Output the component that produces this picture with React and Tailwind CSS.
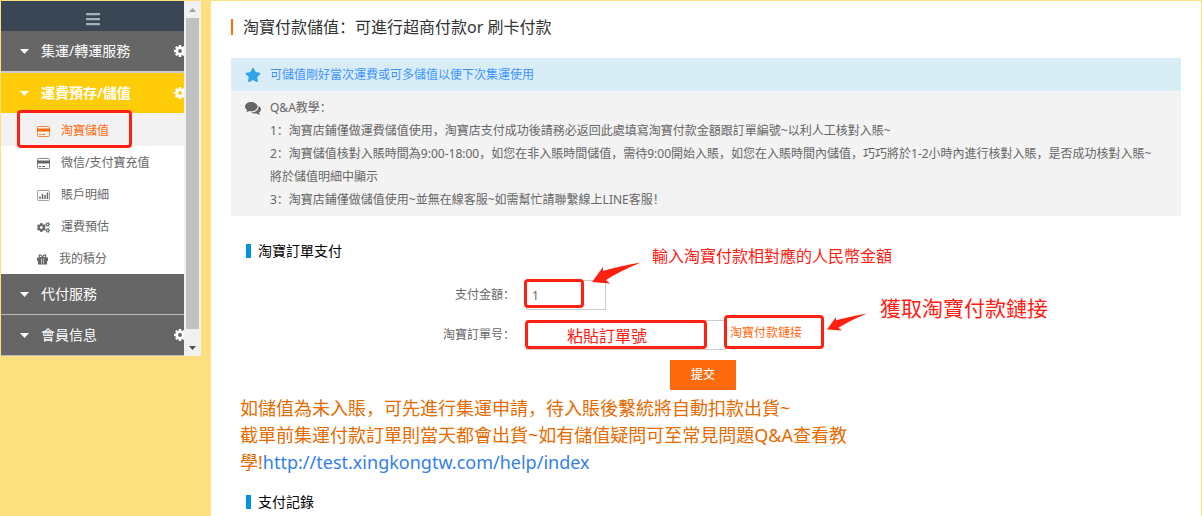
import { useState } from "react";
import { FaBars, FaCogs, FaStar } from "react-icons/fa";

function CardIcon() {
  return (
    <svg viewBox="0 0 13 11" className="h-[11px] w-[13px]" fill="none" stroke="currentColor">
      <rect x="0.5" y="0.5" width="12" height="10" rx="1" opacity="0.8" />
      <path d="M0 4h13" strokeWidth="3" />
      <path d="M2 8.5h2M5 8.5h3" />
    </svg>
  );
}

function ChartIcon() {
  return (
    <svg viewBox="0 0 13 11" className="h-[11px] w-[13px]" fill="none" stroke="currentColor">
      <rect x="0.5" y="0.5" width="12" height="10" rx="1" opacity="0.6" />
      <path d="M3 9V6.5M5.5 9V4M8 9V5M10.5 9V2.5" strokeWidth="1.5" />
    </svg>
  );
}

function GiftIcon() {
  return (
    <svg viewBox="0 0 11 11" className="size-[11px]" fill="currentColor">
      <path d="M0 3.5h11V7H10v3.5H1V7H0z" />
      <path d="M5.5 3.5C3 3.8 2 3.2 2.2 2C2.6 0.5 4.5 0.4 5.5 3.3C6.5 0.4 8.4 0.5 8.8 2C9 3.2 8 3.8 5.5 3.5z" fill="none" stroke="currentColor" strokeWidth="1.2" />
      <path d="M4.5 4.5V9.5M6.5 4.5V9.5" stroke="#fff" strokeWidth="0.6" />
    </svg>
  );
}

function GearIcon() {
  return (
    <svg viewBox="0 0 12 12" className="-mr-[2px] size-3 shrink-0" fill="none" stroke="currentColor">
      <circle cx="6" cy="6" r="3.2" strokeWidth="2.6" />
      <path d="M6 0V2M6 10V12M0 6H2M10 6H12M1.8 1.8L3.2 3.2M8.8 8.8L10.2 10.2M1.8 10.2L3.2 8.8M8.8 3.2L10.2 1.8" strokeWidth="2.4" />
    </svg>
  );
}

function CommentsIcon() {
  return (
    <svg viewBox="0 0 16 13" className="mt-[6px] h-[13px] w-4 shrink-0" fill="currentColor">
      <path d="M6.3 0C9.8 0 12.6 2 12.6 4.6S9.8 9.2 6.3 9.2C5.7 9.2 5.1 9.1 4.5 9C3.5 9.7 2.4 10.2 1 10.3C1.6 9.7 2 9 2.2 8.2C0.8 7.3 0 6 0 4.6C0 2 2.8 0 6.3 0z" />
      <path d="M13.6 4C15.1 4.8 16 6 16 7.2C16 8.6 15.2 9.7 13.9 10.6C14.1 11.4 14.5 12 15.1 12.6C13.7 12.6 12.6 12.1 11.6 11.4C9.7 11.8 7.3 11.4 5.9 10.3C10.2 10.5 13.9 8.2 13.6 4z" />
    </svg>
  );
}

const SUB_ITEMS = [
  { id: "taobao", label: "淘寶儲值", icon: <CardIcon />, active: true },
  { id: "wechat", label: "微信/支付寶充值", icon: <CardIcon /> },
  { id: "detail", label: "賬戶明細", icon: <ChartIcon /> },
  { id: "estimate", label: "運費預估", icon: <FaCogs size={13} /> },
  { id: "points", label: "我的積分", icon: <GiftIcon /> },
];

const QA_LINES = [
  "1：淘寶店鋪僅做運費儲值使用，淘寶店支付成功後請務必返回此處填寫淘寶付款金額跟訂單編號~以利人工核對入賬~",
  "2：淘寶儲值核對入賬時間為9:00-18:00，如您在非入賬時間儲值，需待9:00開始入賬，如您在入賬時間內儲值，巧巧將於1-2小時內進行核對入賬，是否成功核對入賬~將於儲值明細中顯示",
  "3：淘寶店鋪僅做儲值使用~並無在線客服~如需幫忙請聯繫線上LINE客服！",
];

function MenuHeader({ label, gear, active }) {
  return (
    <button
      type="button"
      className={`flex h-10 w-full items-center pl-[19px] text-sm text-white ${active ? "bg-[#ffcc0a] font-bold" : "bg-[#666]"}`}
    >
      <svg viewBox="0 0 9 5" className="mr-3 h-[5px] w-[9px] shrink-0" fill="currentColor"><path d="M0 0h9L4.5 5z" /></svg>
      <span className="flex-1 whitespace-nowrap text-left">{label}</span>
      {gear && <GearIcon />}
    </button>
  );
}

function Sidebar() {
  return (
    <aside className="flex w-[200px] shrink-0 self-start">
      <nav className="min-w-0 flex-1 overflow-hidden bg-white">
        <button type="button" aria-label="menu" className="flex h-[30px] w-full items-center justify-center bg-[#3b4655] pt-[5px] text-[#a3b4bf]">
          <FaBars size={16} />
        </button>
        <div className="border-b-2 border-[#ccc]">
          <MenuHeader label="集運/轉運服務" gear />
        </div>
        <MenuHeader label="運費預存/儲值" gear active />
        <ul className="border-t border-[#f2f2f2]">
          {SUB_ITEMS.map((item) => (
            <li key={item.id} className={item.active ? "relative bg-[#f2f2f2]" : ""}>
              <a href="#" className={`flex h-8 items-center gap-[11px] whitespace-nowrap pl-9 pt-[2px] text-xs ${item.active ? "text-[#ff6a0d]" : "text-[#666]"}`}>
                {item.icon}
                {item.label}
              </a>
              {item.active && <span className="absolute -top-1 left-4 h-[38px] w-[115px] rounded border-3 border-[#ff2012]" />}
            </li>
          ))}
        </ul>
        <div className="border-b border-[#bbb]">
          <MenuHeader label="代付服務" />
        </div>
        <div className="border-b border-[#bbb]">
          <MenuHeader label="會員信息" gear />
        </div>
      </nav>
      <div className="flex w-[17px] flex-col items-center bg-[#f1f1f1]">
        <span className="flex h-[17px] items-center">
          <svg viewBox="0 0 7 4" className="h-1 w-[7px]" fill="#a3a3a3"><path d="M0 4L3.5 0L7 4z" /></svg>
        </span>
        <span className="w-[13px] flex-1 bg-[#c1c1c1]" />
        <span className="mt-[10px] flex h-[17px] items-center">
          <svg viewBox="0 0 7 4" className="h-1 w-[7px]" fill="#505050"><path d="M0 0L3.5 4L7 0z" /></svg>
        </span>
      </div>
    </aside>
  );
}

function SectionTitle({ children }) {
  return (
    <h2 className="flex h-5 items-center gap-[7px] pl-[15px] text-sm text-black">
      <span className="h-[14px] w-[5px] bg-[#0092dc]" />
      {children}
    </h2>
  );
}

function Arrow({ className }) {
  return (
    <svg viewBox="0 0 50 22" className={className} fill="#ff2012">
      <path d="M0 20L11 5L11 9Q28 4 49 0.5Q28 9 14 18L18 21.5z" />
    </svg>
  );
}

function PayForm() {
  const [amount, setAmount] = useState("1");
  const [orderNo, setOrderNo] = useState("");

  return (
    <form onSubmit={(e) => e.preventDefault()} className="relative mt-[19px] text-xs text-[#666]">
      <div className="flex h-[30px] items-center">
        <label htmlFor="amount" className="w-[284px] text-right">支付金額：</label>
        <input
          id="amount"
          value={amount}
          onChange={(e) => setAmount(e.target.value)}
          className="ml-[11px] h-[30px] w-20 border border-[#ccc] px-[5px]"
        />
      </div>
      <div className="mt-[10px] flex h-[30px] items-center">
        <label htmlFor="order" className="w-[284px] text-right">淘寶訂單号：</label>
        <input
          id="order"
          value={orderNo}
          onChange={(e) => setOrderNo(e.target.value)}
          className="ml-[11px] h-[30px] w-[200px] border border-[#ccc] px-[5px]"
        />
        <a href="#" className="ml-1 pb-1 text-[#ff6a0d]">淘寶付款鏈接</a>
      </div>
      <button type="submit" className="ml-[439px] mt-[10px] block h-[30px] w-[66px] bg-[#ff6a0d] font-medium text-white">提交</button>

      {/* red guide marks drawn over the fields */}
      <div className="pointer-events-none absolute inset-0 whitespace-nowrap text-[#ff2012]">
        <span className="absolute -top-px left-[293px] h-[29px] w-[60px] rounded border-3 border-current" />
        <span className="absolute left-[294px] top-10 h-[29px] w-[182px] rounded border-3 border-current" />
        <span className="absolute left-[336px] top-11 text-base">粘貼訂單號</span>
        <span className="absolute left-[493px] top-[35px] h-[34px] w-[100px] rounded border-3 border-current" />
        <Arrow className="absolute -top-[18px] left-[361px] h-[22px] w-[50px]" />
        <span className="absolute -top-9 left-[421px] text-base">輸入淘寶付款相對應的人民幣金額</span>
        <Arrow className="absolute left-[596px] top-8 h-[20px] w-[41px]" />
        <span className="absolute left-[649px] top-[13px] text-[21px] leading-[30px]">獲取淘寶付款鏈接</span>
      </div>
    </form>
  );
}

export default function App() {
  return (
    <div className="flex min-h-screen gap-[10px] bg-[#fcdf7e] pl-px pr-px pt-px font-['Noto_Sans','Noto_Sans_CJK_SC',sans-serif]">
      <Sidebar />
      <main className="min-w-0 flex-1 bg-white px-5">
        <h1 className="mt-[14px] flex h-6 items-center gap-[10px] text-base text-[#333]">
          <span className="h-4 w-[2px] bg-[#ff6a0d]" />
          淘寶付款儲值：可進行超商付款or 刷卡付款
        </h1>

        <div className="mt-[19px] flex h-[33px] items-center gap-[9px] bg-[#d9edf7] pl-[14px] text-xs text-[#3d94ff]">
          <FaStar size={16} className="text-[#2fa4e7]" />
          可儲值剛好當次運費或可多儲值以便下次集運使用
        </div>
        <div className="flex gap-[9px] bg-[#f3f3f3] py-[5px] pl-[14px] pr-[18px] text-xs leading-[23px] text-[#666]">
          <CommentsIcon />
          <div>
            <p>Q&amp;A教學：</p>
            {QA_LINES.map((line) => (
              <p key={line}>{line}</p>
            ))}
          </div>
        </div>

        <div className="mt-[25px]">
          <SectionTitle>淘寶訂單支付</SectionTitle>
        </div>
        <PayForm />

        <p className="mb-4 ml-[9px] mt-[5px] max-w-[630px] text-lg leading-[27px] text-[#e66b00]">
          如儲值為未入賬，可先進行集運申請，待入賬後繫統將自動扣款出貨~
          <br />
          截單前集運付款訂單則當天都會出貨~如有儲值疑問可至常見問題Q&amp;A查看教學!
          <a href="http://test.xingkongtw.com/help/index" className="text-[#337fe5]">http://test.xingkongtw.com/help/index</a>
        </p>
        <SectionTitle>支付記錄</SectionTitle>
      </main>
    </div>
  );
}
